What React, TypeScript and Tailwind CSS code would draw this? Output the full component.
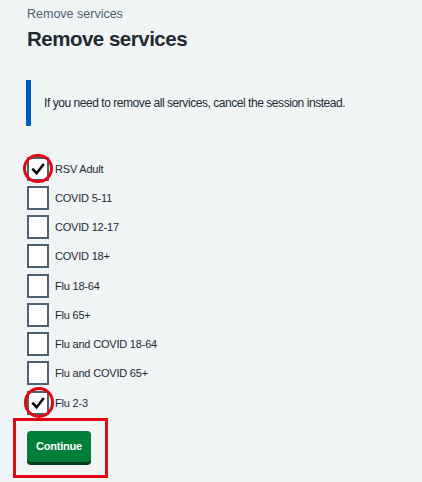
import React from "react";

const items = [
  { label: "RSV Adult", checked: true },
  { label: "COVID 5-11", checked: false },
  { label: "COVID 12-17", checked: false },
  { label: "COVID 18+", checked: false },
  { label: "Flu 18-64", checked: false },
  { label: "Flu 65+", checked: false },
  { label: "Flu and COVID 18-64", checked: false },
  { label: "Flu and COVID 65+", checked: false },
  { label: "Flu 2-3", checked: true },
];

function Tick() {
  return (
    <svg width="18" height="20" viewBox="0 0 18 20" fill="none">
      <path d="M4.2 10.6 L7.6 14.2 L14 6" stroke="#0b0c0c" strokeWidth="2.6" strokeLinecap="square" strokeLinejoin="miter" />
    </svg>
  );
}

export default function App() {
  return (
    <div className="relative min-h-[482px] w-full bg-[#f0f4f5] text-[#212b32] font-['Liberation_Sans',Arial,sans-serif]">
      <div className="pl-[27px] pt-[6px]">
        <p className="text-[12.5px] leading-[16px] text-[#4c6272]">Remove services</p>
        <h1 className="mt-[5px] text-[20.5px] leading-[24px] font-bold tracking-[-0.5px]">Remove services</h1>
        <div className="mt-[29px] -ml-px border-l-[5px] border-[#005eb8] py-[15px] pl-[13px]">
          <p className="text-[12px] leading-[16px] tracking-[-0.45px]">
            If you need to remove all services, cancel the session instead.
          </p>
        </div>
        <div className="mt-[30.5px] flex flex-col gap-[5.25px]">
          {items.map((it) => (
            <div key={it.label} className="flex h-[24px] items-center">
              <div className="flex h-[24px] w-[22px] items-center justify-center border-2 border-[#4c6272] bg-white">
                {it.checked ? <Tick /> : null}
              </div>
              <span className="ml-[6px] text-[11px] leading-[14px] tracking-[-0.2px]">{it.label}</span>
            </div>
          ))}
        </div>
        <button className="mt-[16.5px] flex h-[31px] w-[64px] items-center justify-center rounded-[4px] bg-[#007f3b] text-[11px] font-bold tracking-[-0.2px] text-white shadow-[0_3px_0_#00401e]">
          Continue
        </button>
      </div>
      <div className="pointer-events-none absolute left-[23px] top-[154px] h-[29px] w-[30px] rounded-full border-[3px] border-[#e30613]" />
      <div className="pointer-events-none absolute left-[23.5px] top-[387px] h-[31px] w-[30px] rounded-full border-[3px] border-[#e30613]" />
      <div className="pointer-events-none absolute left-[13px] top-[418px] h-[60px] w-[95px] border-[3px] border-[#e30613]" />
    </div>
  );
}
